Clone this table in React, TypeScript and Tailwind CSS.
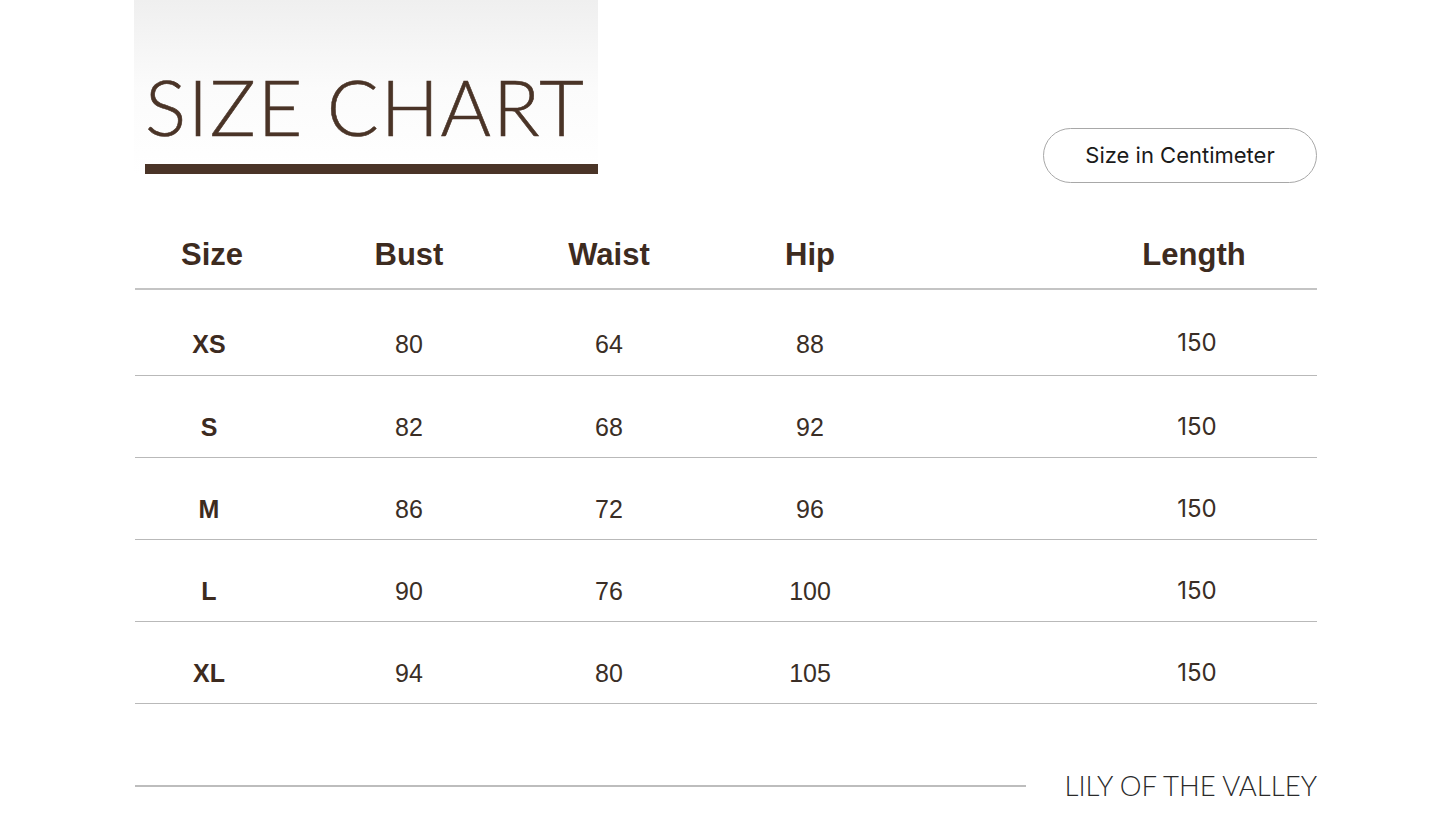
import React from "react";

const rows = [
  { s: "XS", b: "80", w: "64", h: "88", l: "150", first: true },
  { s: "S", b: "82", w: "68", h: "92", l: "150" },
  { s: "M", b: "86", w: "72", h: "96", l: "150" },
  { s: "L", b: "90", w: "76", h: "100", l: "150" },
  { s: "XL", b: "94", w: "80", h: "105", l: "150" },
];

const gridCols = "grid grid-cols-[148px_252px_148px_254px_140px_240px]";

export default function App() {
  return (
    <div className="w-[1445px] h-[813px] bg-white overflow-hidden relative font-['Liberation_Sans',Arial,sans-serif]">
      <div className="ml-[135px] w-[1182px] flex flex-col">
        {/* Top */}
        <div className="flex items-start justify-between h-[220px]">
          <div className="w-[464px] -ml-[1px] h-[175px] bg-gradient-to-b from-[#efefef] via-[#fbfbfb] to-white flex flex-col pl-[11px]">
            <div className="mt-[66px] h-[80px] text-[77px] leading-[80px] font-light text-[#4a3427] tracking-[1.8px] whitespace-nowrap font-['Lato','Open_Sans',sans-serif] [-webkit-text-stroke:0.6px_#4a3427]">
              SIZE CHART
            </div>
            <div className="mt-[18px] h-[10px] w-[453px] bg-[#4a3427]" />
          </div>
          <div className="mt-[128px] w-[274px] h-[55px] rounded-full border border-[#a8a8a8] flex items-center justify-center text-[22px] text-[#1a1a1a] font-['Inter',sans-serif]">
            Size in Centimeter
          </div>
        </div>

        {/* Header */}
        <div className={`${gridCols} h-[70px] pt-[2px] items-center border-b-2 border-[#c4c4c4] text-[31px] font-bold text-[#3d2b1f]`}>
          <div className="text-center pl-[6px]">Size</div>
          <div className="text-center">Bust</div>
          <div className="text-center">Waist</div>
          <div className="text-center">Hip</div>
          <div />
          <div className="text-center -ml-[6px]">Length</div>
        </div>

        {rows.map((r, i) => (
          <div
            key={i}
            className={`${gridCols} ${r.first ? "h-[86px] pt-[40px]" : "h-[82px] pt-[37px]"} border-b-[1.5px] border-[#b9b9b9] text-[25px] leading-[28px] text-[#3a2e26]`}
          >
            <div className="text-center font-bold text-[#3d2b1f]">{r.s}</div>
            <div className="text-center">{r.b}</div>
            <div className="text-center">{r.w}</div>
            <div className="text-center">{r.h}</div>
            <div />
            <div className={`text-center text-[24px] font-['Inter',sans-serif] ${r.first ? "-mt-[1px]" : ""}`}>
              {r.l}
            </div>
          </div>
        ))}

        {/* Footer */}
        <div className="mt-[67px] flex items-center">
          <div className="w-[891px] h-[1.5px] bg-[#bdbdbd]" />
          <div className="flex-1" />
          <div className="text-[27.5px] leading-[30px] font-light text-[#2a2a2a] whitespace-nowrap font-['Lato','Open_Sans',sans-serif]">
            LILY OF THE VALLEY
          </div>
        </div>
      </div>
    </div>
  );
}
